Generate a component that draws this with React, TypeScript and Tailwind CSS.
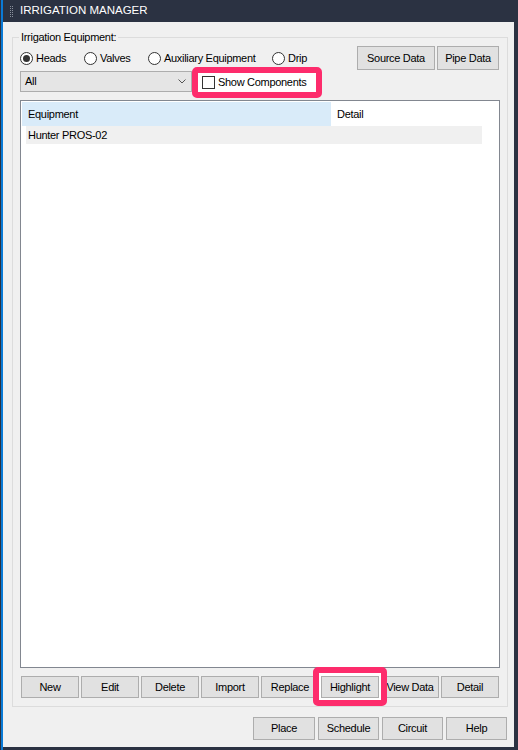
import React from 'react';

const font = "font-['Liberation_Sans',Arial,sans-serif] text-[11px] tracking-[-0.3px] text-black";

function Btn({ label, w, h = 'h-[22px]' }: { label: string; w: string; h?: string }) {
  return (
    <div className={`${w} ${h} shrink-0 border border-[#adadad] bg-[#e1e1e1] flex items-center justify-center`}>
      {label}
    </div>
  );
}

function Radio({ label, checked, w }: { label: string; checked?: boolean; w: string }) {
  return (
    <div className={`${w} flex items-center shrink-0`}>
      <div className="w-[13px] h-[13px] rounded-full border border-[#333333] bg-white flex items-center justify-center">
        {checked && <div className="w-[7px] h-[7px] rounded-full bg-[#333333]" />}
      </div>
      <span className="ml-[3px]">{label}</span>
    </div>
  );
}

function Grip() {
  return (
    <svg width="4" height="11" viewBox="0 0 4 11" className="shrink-0">
      {[0, 2, 4, 6, 8, 10].map((y) => (
        <g key={y} fill="#8a909c">
          <rect x="0" y={y} width="1" height="1" />
          <rect x="2" y={y} width="1" height="1" />
        </g>
      ))}
    </svg>
  );
}

export default function App() {
  const actions = ['New', 'Edit', 'Delete', 'Import', 'Replace'];

  return (
    <div className={`w-[518px] h-[750px] bg-[#2b3242] flex ${font}`}>
      <div className="w-px" />
      <div className="w-[2px] bg-[#0a7ad6]" />
      <div className="flex-1 flex flex-col pr-[4px] pb-[3px]">
        {/* title bar */}
        <div className="h-[22px] flex items-center pl-[7px] gap-[5px]">
          <Grip />
          <span className="text-white text-[11.5px] tracking-normal ml-[1px]">IRRIGATION MANAGER</span>
        </div>

        {/* panel */}
        <div className="flex-1 bg-[#f0f0f0] flex flex-col">
          <div className="relative mt-[15px] ml-[9px] w-[496px] h-[670px] border border-[#dcdcdc] flex flex-col px-[7px] pb-[8px]">
            <span className="absolute -top-[8px] left-[6px] px-[2px] bg-[#f0f0f0] leading-[14px]">
              Irrigation Equipment:
            </span>

            <div className="mt-[8px] h-[24px] flex items-center">
              <Radio label="Heads" checked w="w-[64px]" />
              <Radio label="Valves" w="w-[64px]" />
              <Radio label="Auxiliary Equipment" w="w-[124px]" />
              <Radio label="Drip" w="w-[60px]" />
              <div className="ml-auto mr-[1px] flex gap-[2px]">
                <Btn label="Source Data" w="w-[78px]" h="h-[24px]" />
                <Btn label="Pipe Data" w="w-[62px]" h="h-[24px]" />
              </div>
            </div>

            <div className="mt-[1px] h-[21px] flex items-end">
              <div className="w-[172px] h-[21px] border border-[#adadad] bg-[#e5e5e5] flex items-center pl-[4px] pr-[5px]">
                <span>All</span>
                <svg width="8" height="5" viewBox="0 0 8 5" className="ml-auto">
                  <path d="M0.5 0.5 L4 4 L7.5 0.5" fill="none" stroke="#555" strokeWidth="1" />
                </svg>
              </div>
              <div className="relative ml-[7px] w-[116px] h-[19px]">
                <div className="absolute -top-[6px] -bottom-[6px] -left-[7px] -right-[7px] border-[6px] border-[#fd2c6c] rounded-[5px] bg-white" />
                <div className="relative h-full flex items-center pl-[3px]">
                  <div className="w-[13px] h-[13px] border border-[#333333] bg-white" />
                  <span className="ml-[3px]">Show Components</span>
                </div>
              </div>
            </div>

            {/* list view */}
            <div className="mt-[8px] flex-1 border border-[#828790] bg-white p-[1px] flex flex-col">
              <div className="h-[24px] flex">
                <div className="w-[309px] bg-[#d9ebf9] flex items-center pl-[6px]">Equipment</div>
                <div className="w-[150px] bg-white flex items-center pl-[6px]">Detail</div>
              </div>
              <div className="ml-[4px] w-[456px] h-[18px] bg-[#f0f0f0] flex items-center pl-[2px]">
                Hunter PROS-02
              </div>
            </div>

            <div className="mt-[8px] h-[22px] flex gap-[2px] pl-[1px]">
              {actions.map((a) => (
                <Btn key={a} label={a} w="w-[58px]" />
              ))}
              <div className="relative w-[58px] h-[22px] shrink-0">
                <div className="absolute z-10 -top-[9px] -bottom-[8px] -left-[8px] -right-[8px] border-[6px] border-[#fd2c6c] rounded-[5px] bg-white" />
                <div className="relative z-20 w-full h-full border border-[#adadad] bg-[#e1e1e1] flex items-center justify-center">
                  Highlight
                </div>
              </div>
              <Btn label="View Data" w="w-[58px]" />
              <Btn label="Detail" w="w-[58px]" />
            </div>
          </div>

          <div className="mt-[10px] flex justify-end gap-[3px] pr-[7px]">
            <Btn label="Place" w="w-[62px]" h="h-[23px]" />
            <Btn label="Schedule" w="w-[61px]" h="h-[23px]" />
            <Btn label="Circuit" w="w-[61px]" h="h-[23px]" />
            <Btn label="Help" w="w-[61px]" h="h-[23px]" />
          </div>
        </div>
      </div>
    </div>
  );
}
